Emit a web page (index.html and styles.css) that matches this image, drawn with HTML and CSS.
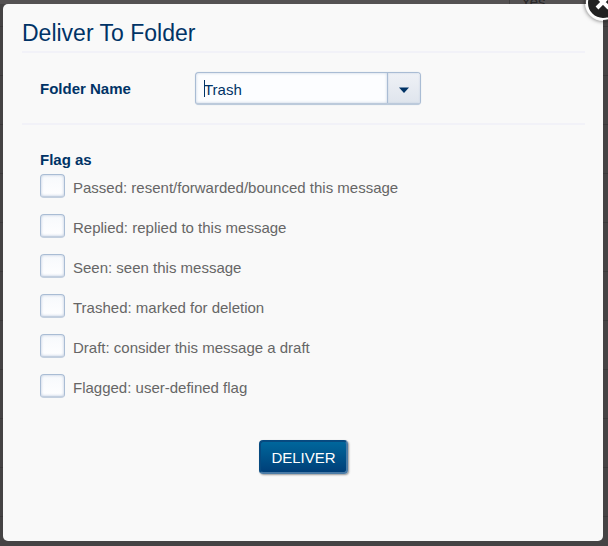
FILE: index.html
```
<!DOCTYPE html>
<html lang="en">
<head>
    <meta charset="UTF-8">
    <meta name="viewport" content="width=device-width, initial-scale=1.0">
    <title>Deliver To Folder</title>
    <link rel="stylesheet" href="styles.css">
</head>
<body>
    <div class="page-behind" aria-hidden="true">
        <div class="behind-row">
            <div class="behind-cell">Yes</div>
        </div>
    </div>

    <div class="overlay">
        <div class="dialog" role="dialog" aria-labelledby="dialog-title">
            <button type="button" class="close-btn" aria-label="Close">
                <svg width="36" height="36" viewBox="0 0 36 36">
                    <circle cx="18" cy="18" r="16" fill="#222" stroke="#fff" stroke-width="2"/>
                    <path d="M12 11L24 23M24 11L12 23" stroke="#fff" stroke-width="4"/>
                </svg>
            </button>

            <h1 id="dialog-title">Deliver To Folder</h1>

            <form>
                <div class="folder-row">
                    <label for="folder">Folder Name</label>
                    <div class="combo">
                        <input type="text" id="folder" name="folder" value="Trash">
                        <button type="button" class="combo-btn" aria-label="Show folders">
                            <svg width="10" height="6" viewBox="0 0 10 6">
                                <path d="M0 0.5H10L5 6Z" fill="#003366"/>
                            </svg>
                        </button>
                    </div>
                </div>

                <fieldset>
                    <legend>Flag as</legend>
                    <label class="flag"><input type="checkbox" name="passed">Passed: resent/forwarded/bounced this message</label>
                    <label class="flag"><input type="checkbox" name="replied">Replied: replied to this message</label>
                    <label class="flag"><input type="checkbox" name="seen">Seen: seen this message</label>
                    <label class="flag"><input type="checkbox" name="trashed">Trashed: marked for deletion</label>
                    <label class="flag"><input type="checkbox" name="draft">Draft: consider this message a draft</label>
                    <label class="flag"><input type="checkbox" name="flagged">Flagged: user-defined flag</label>
                </fieldset>

                <div class="button-container">
                    <button type="submit" class="deliver-btn">DELIVER</button>
                </div>
            </form>
        </div>
    </div>
</body>
</html>
```

FILE: styles.css
```
* {
    box-sizing: border-box;
}
body {
    margin: 0;
    font-family: "Liberation Sans", Arial, sans-serif;
    font-size: 15px;
    color: #666;
    background-color: #454344;
}
/* Table of the page under the overlay */
.page-behind {
    position: absolute;
    inset: 0;
    overflow: hidden;
    background: repeating-linear-gradient(#454344 0 26px, #3b393a 26px 27px, #454344 27px 49px);
}
.behind-row {
    display: flex;
    justify-content: flex-end;
    height: 4px;
    background-color: #555253;
}
.behind-cell {
    width: 99px;
    padding-left: 11px;
    border-left: 1px solid #434142;
    line-height: 4px;
    color: #2a2829;
}
.overlay {
    position: relative;
    display: flex;
    min-height: 100vh;
    padding: 4px 5px 5px 3px;
    overflow: hidden;
}
.dialog {
    position: relative;
    flex: 1;
    padding: 14px 18px 20px 19px;
    border-radius: 5px;
    background-color: #f9f9f9;
}
.close-btn {
    position: absolute;
    top: -19px;
    right: -18px;
    width: 36px;
    height: 36px;
    padding: 0;
    border: none;
    border-radius: 50%;
    background: none;
    box-shadow: 0 0 4px rgba(0, 0, 0, 0.6);
    cursor: pointer;
}
.close-btn svg {
    display: block;
}
h1 {
    margin: 0;
    padding-bottom: 3px;
    border-bottom: 2px solid #f2f2f8;
    font-size: 23px;
    font-weight: normal;
    line-height: 30px;
    color: #003366;
}
.folder-row {
    display: flex;
    align-items: center;
    padding: 19px 18px 18px;
    border-bottom: 2px solid #f2f2f8;
}
.folder-row label {
    width: 155px;
    font-weight: bold;
    color: #003366;
}
.combo {
    display: flex;
    width: 226px;
    height: 33px;
    border: 1px solid #a9bcd4;
    border-bottom: 2px solid #bccadb;
    border-radius: 4px;
    background-color: #fcfdff;
    box-shadow: 0 0 1px #c3cfdf;
    overflow: hidden;
}
.combo input {
    flex: 1;
    min-width: 0;
    padding: 2px 8px 0;
    border: none;
    outline: none;
    font: inherit;
    color: #003366;
    /* text cursor */
    background: linear-gradient(#003366, #003366) 8px 7px / 1px 17px no-repeat;
    box-shadow: inset 0 0 3px #c3cfdf;
}
.combo-btn {
    width: 33px;
    padding: 3px 0 0;
    border: none;
    border-left: 1px solid #a9bcd4;
    background: linear-gradient(#eef1f6, #dfe5ed);
    box-shadow: inset 0 0 2px #c3cfdf;
    cursor: pointer;
}
.combo-btn svg {
    display: block;
    margin: 0 auto;
}
fieldset {
    margin: 0;
    padding: 26px 18px 0;
    border: none;
}
legend {
    float: left;
    width: 100%;
    padding: 0;
    font-weight: bold;
    line-height: 18px;
    color: #003366;
}
.flag {
    display: flex;
    clear: both;
    gap: 8px;
    height: 40px;
    padding-top: 5px;
    line-height: 27px;
}
.flag input {
    appearance: none;
    width: 25px;
    height: 24px;
    margin: 0;
    border: 1px solid #a9bcd4;
    border-bottom: 2px solid #c3cfdf;
    border-radius: 4px;
    background: linear-gradient(#f7f9fc, #fefeff);
    box-shadow: inset 0 0 3px #b8c7dc;
}
.flag input:checked {
    background: #003366;
}
.button-container {
    display: flex;
    justify-content: center;
    padding-top: 31px;
}
.deliver-btn {
    height: 34px;
    padding: 1px 10px 0;
    border: 2px solid #0b4a82;
    border-color: #074a80 #4a7ba6 #4a7ba6 #074a80;
    border-radius: 4px;
    font: inherit;
    color: #fff;
    background: linear-gradient(#00679c, #003f78);
    box-shadow: 1px 1px 2px rgba(0, 0, 0, 0.4);
    cursor: pointer;
}
```
